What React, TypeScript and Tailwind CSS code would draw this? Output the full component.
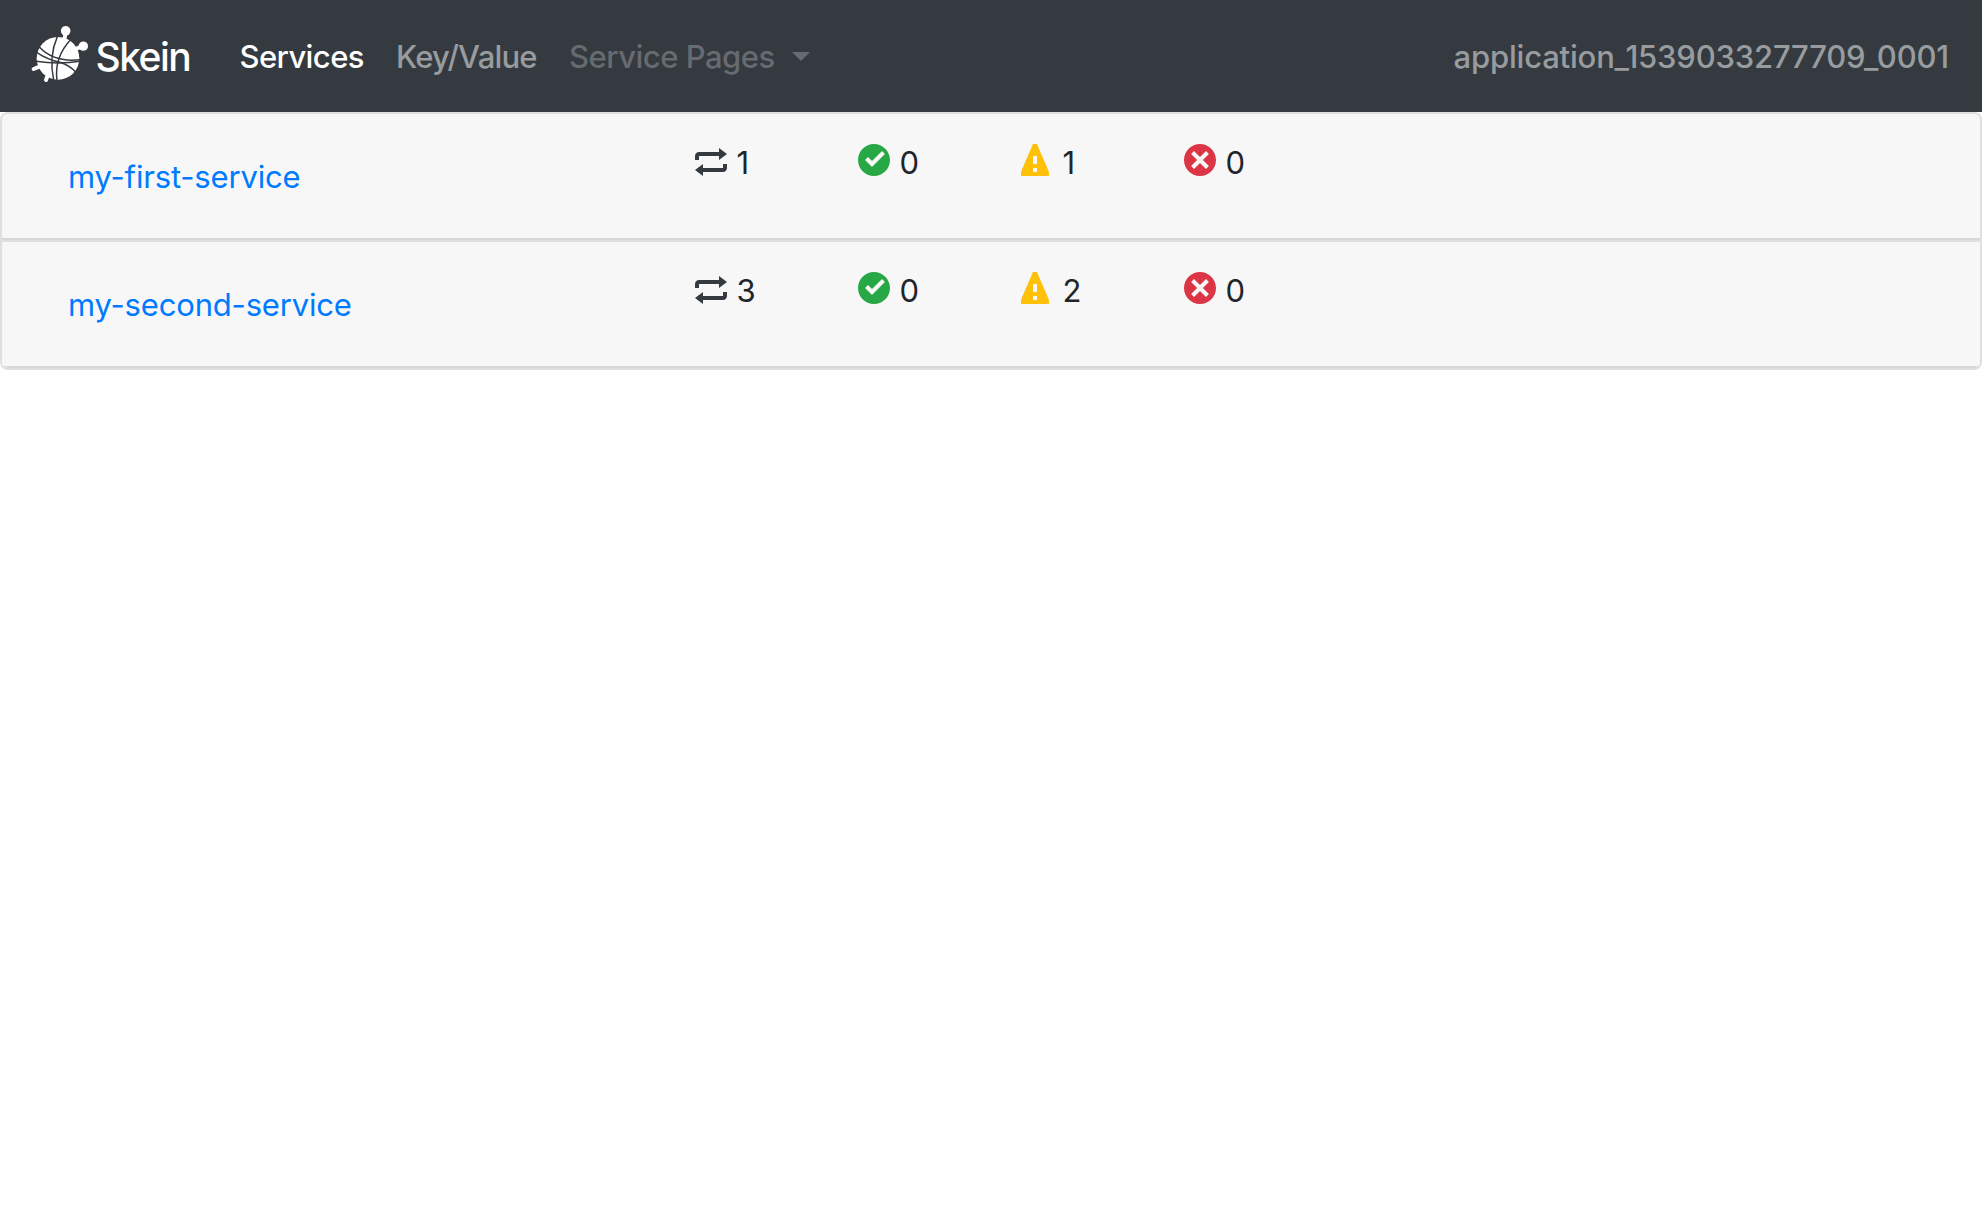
import type { ReactNode } from 'react';

function SkeinLogo() {
  return (
    <svg viewBox="0 0 192 192" className="size-16 shrink-0" aria-hidden="true">
      <g fill="#fff" stroke="#fff" strokeLinecap="round">
        <circle cx="90" cy="109" r="64" stroke="none" />
        <circle cx="113" cy="26.500" r="14.500" stroke="none" />
        <circle cx="166" cy="72.500" r="14" stroke="none" />
        <path d="M113 34 L108 56 M160 74 L140 82" strokeWidth="12" />
        <path d="M17 141 L42 131 M54 174 L62 152" strokeWidth="12" />
      </g>
      <g fill="none" stroke="#343a40" strokeWidth="4.500">
        <path d="M88 44 Q62 104 77 174" />
        <path d="M129 52 Q78 106 87 175" />
        <path d="M34 75 Q78 122 156 113" />
        <path d="M27 92 Q60 114 96 121 Q124 130 144 151" />
        <path d="M24 118 Q92 128 156 118" />
      </g>
    </svg>
  );
}

const icons = {
  loop: {
    color: 'fill-[#343a40]',
    d: 'M6 1v1h-5c-.56 0-1 .44-1 1v1h1v-1h5v1l2-1.5-2-1.5zm-4 4l-2 1.500 2 1.500v-1h5c.56 0 1-.44 1-1v-1h-1v1h-5v-1z',
  },
  check: {
    color: 'fill-[#28a745]',
    d: 'M4 0c-2.200 0-4 1.800-4 4s1.800 4 4 4 4-1.800 4-4-1.800-4-4-4zm2 1.780l.72.72-3.220 3.220-1.720-1.720.72-.72 1 1 2.500-2.500z',
  },
  warning: {
    color: 'fill-[#ffc107]',
    d: 'M3.090 0c-.06 0-.1.04-.13.09l-2.940 6.810c-.02.05-.03.13-.03.19v.81c0 .05.04.09.09.09h6.810c.05 0 .09-.04.09-.09v-.81c0-.05-.01-.14-.03-.19l-2.940-6.810c-.02-.05-.07-.09-.13-.09h-.69zm-.09 3h1v2h-1v-2zm0 3h1v1h-1v-1z',
  },
  fail: {
    color: 'fill-[#dc3545]',
    d: 'M4 0c-2.200 0-4 1.800-4 4s1.800 4 4 4 4-1.800 4-4-1.800-4-4-4zm-1.500 1.780l1.500 1.500 1.500-1.500.72.72-1.500 1.500 1.500 1.500-.72.72-1.500-1.500-1.500 1.500-.72-.72 1.500-1.500-1.500-1.500.72-.72z',
  },
};

function Stat({ icon, children }: { icon: keyof typeof icons; children: ReactNode }) {
  const { color, d } = icons[icon];
  return (
    <div className="flex w-[163px] items-start gap-[9.5px] pt-[30px]">
      <svg viewBox="0 0 8 8" className={`size-8 shrink-0 ${color}`} aria-hidden="true">
        <path d={d} />
      </svg>
      <span className="pt-[3px] leading-8">{children}</span>
    </div>
  );
}

const services = [
  { name: 'my-first-service', counts: [1, 0, 1, 0] },
  { name: 'my-second-service', counts: [3, 0, 2, 0] },
];

export default function App() {
  return (
    <div className="min-h-screen bg-white font-[Inter,sans-serif] text-[31px] text-[#212529]">
      <nav className="flex h-28 items-center bg-[#343a40] pr-[33px] pl-7 font-medium leading-[48px] text-[#999c9f]">
        <div className="flex h-full w-[211.5px] shrink-0 items-center gap-[3.5px] pb-1">
          <SkeinLogo />
          <span className="pt-[5px] text-[39px] tracking-[-1.5px] text-white">Skein</span>
        </div>
        <a className="w-[156.5px] pt-px tracking-[-0.6px] text-white">Services</a>
        <a className="w-[173px] pt-px tracking-[-0.8px]">Key/Value</a>
        <a className="flex items-center gap-[17px] pt-px tracking-[-0.5px] text-[#676b70]">
          Service Pages
          <span className="h-0 w-0 border-x-[9px] border-t-[9px] border-x-transparent border-t-[#676b70]" />
        </a>
        <span className="ml-auto pt-px tracking-[-0.18px]">application_1539033277709_0001</span>
      </nav>
      <main>
        {services.map(({ name, counts }, i) => (
          <section
            key={name}
            className={
              i === 0
                ? 'overflow-hidden rounded-t-lg border-2 border-b-0 border-[#dfdfdf]'
                : 'overflow-hidden rounded-b-lg border-2 border-[#dfdfdf]'
            }
          >
            <div className="flex h-[126px] border-b-2 border-[#d8d8d8] bg-[#f7f7f7]">
              <a className="w-[693px] pt-[39px] pl-[66px] leading-[48px] tracking-[-0.18px] text-[#007bff]">{name}</a>
              <Stat icon="loop">{counts[0]}</Stat>
              <Stat icon="check">{counts[1]}</Stat>
              <Stat icon="warning">{counts[2]}</Stat>
              <Stat icon="fail">{counts[3]}</Stat>
            </div>
          </section>
        ))}
      </main>
    </div>
  );
}
